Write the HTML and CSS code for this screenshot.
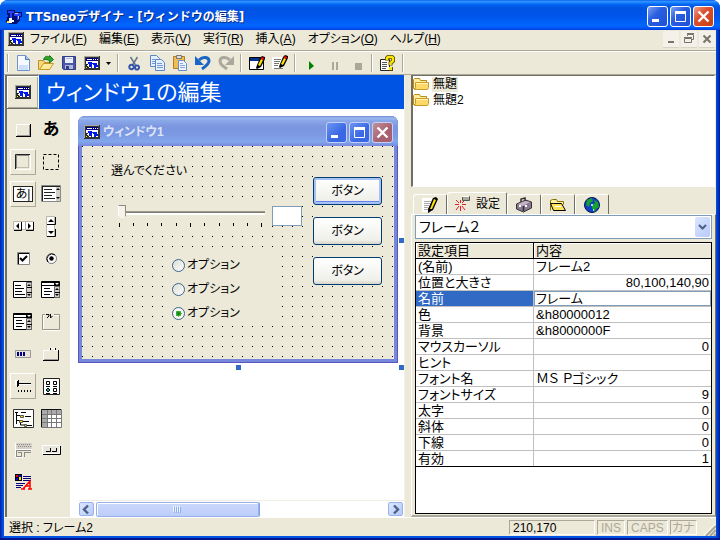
FILE: index.html
```html
<!DOCTYPE html>
<html lang="ja">
<head>
<meta charset="utf-8">
<title>TTSneoデザイナ</title>
<link rel="stylesheet" href="styles.css">
</head>
<body>
<svg class="defs" aria-hidden="true">
  <symbol id="app" viewBox="0 0 16 16"><g shape-rendering="crispEdges"><path fill="#333" d="M0 1h16v14H0z"/><path fill="#aaa89d" d="M0 1h15v1H1v12H0z"/><path fill="#fff" d="M2 3h12v10H2z"/><path fill="#000080" d="M2 3h12v3H2z"/><path fill="#fff" d="M3 4h5v1H3zM9 4h1v1H9zM11 4h1v1h-1zM13 4h1v1h-1z"/><path fill="#0018e8" d="M4 7h4v1h5v2h1v2h-2v1h-2v-3H9V9H8v3H7V9H4zM5 9h3v4H7v-1H5z"/><path fill="#222" d="M2 9h2v1H3v1h2v2H3v-1H2z"/><path fill="#ffe600" d="M2 12h1v1H2zM4 11h1v1H4z"/></g></symbol>
  <symbol id="folder" viewBox="0 0 16 14"><path fill="#fff0a0" stroke="#b88a18" d="M.5 11.500V2.500l1-1h5l1 2h6v8z"/><path fill="#ffd967" stroke="#c99a25" d="M2.500 5.500h13v5l-1 2h-13l1-2z"/><path fill="#fff5b8" d="M3 6h12v1H3z"/></symbol>
  <symbol id="pencil" viewBox="0 0 16 16"><path fill="#fff" d="M0 2h11v12H0z"/><path stroke="#777" d="M2 4.500h7M2 6.500h6M2 8.500h5M2 10.500h4M2 13.500h9"/><path fill="#000" d="m8 9 3-7 2-2 3 1v2l-4 8-4 2-1-1z"/><path fill="#ffe600" d="m9 9 3-6 2 1-3 6z"/><path fill="#f00" d="m12 2 1-1 2 1v1l-1 1-2-1z"/></symbol>
  <symbol id="listicon" viewBox="0 0 20 18"><path fill="#fff" stroke="#000" d="M.5.5h18v16H.5z"/><path stroke="#000" d="M2 4.500h6M2 7.500h9M2 10.500h7M2 13.500h10"/><path fill="#d4d0c8" stroke="#666" d="M13.500 1.500h5v15h-5z"/><path fill="#000" d="m16 3 2 2h-4zM14 13h4l-2 2z"/><path stroke="#000" d="M14 6.500h5M14 11.500h5"/></symbol>
  <symbol id="comboicon" viewBox="0 0 20 18"><path fill="#fff" stroke="#000" d="M.5.5h18v16H.5z"/><path fill="#000" d="M1 1h17v4H1z"/><path fill="#fff" d="M1 2h12v2H1z"/><path stroke="#000" d="M3 7.500h6M3 10.500h8M3 13.500h6"/><path fill="#d4d0c8" stroke="#666" d="M13.500 5.500h5v11h-5z"/><path fill="#fff" d="M14 2h4l-2 2z"/><path fill="#000" d="m16 7 2 2h-4zM14 13h4l-2 2z"/><path stroke="#000" d="M14 11.500h5"/></symbol>
</svg>
<div class="window">
  <header class="titlebar">
    <svg class="i16" viewBox="0 0 16 16"><g shape-rendering="crispEdges"><path fill="#001070" d="M1 1h8v2h7v5h-2v3l-3 4H4l-4-2 2-7H1z"/><path fill="#2840ff" d="M2 2h6v2H6v5H4V4H2zM8 4h7v3h-2v4h-2V7H8z"/><path fill="#fff" d="M3 9h3v2h2v2H6v1H3z"/><path fill="#ffe600" d="M1 12h2v2H1z"/><path fill="#b8c8ff" d="M9 4h3v1H9zM12 7h1v3h-1z"/></g></svg>
    <h1>TTSneoデザイナ - [ウィンドウの編集]</h1>
    <div class="caption">
      <button aria-label="最小化"><svg viewBox="0 0 19 19"><path fill="#fff" d="M4 12h7v3H4z"/></svg></button>
      <button aria-label="最大化"><svg viewBox="0 0 19 19"><path fill="none" stroke="#fff" d="M4.500 4.500h10v10h-10z"/><path fill="#fff" d="M4 4h11v3H4z"/></svg></button>
      <button class="close" aria-label="閉じる"><svg viewBox="0 0 19 19"><path stroke="#fff" stroke-width="2.400" d="m4.500 4.500 10 10M14.500 4.500l-10 10"/></svg></button>
    </div>
  </header>

  <nav class="menubar">
    <svg class="i16"><use href="#app"/></svg>
    <button>ファイル(<u>F</u>)</button><button>編集(<u>E</u>)</button><button>表示(<u>V</u>)</button><button>実行(<u>R</u>)</button><button>挿入(<u>A</u>)</button><button>オプション(<u>O</u>)</button><button>ヘルプ(<u>H</u>)</button>
    <div class="mdi">
      <button aria-label="子ウィンドウを最小化"><svg viewBox="0 0 16 16"><path fill="#777469" d="M5 10h6v2H5z"/></svg></button>
      <button aria-label="元に戻す"><svg viewBox="0 0 16 16"><path fill="none" stroke="#777469" d="M6.500 5V3.500h6v5H11M3.500 7.500h7v4h-7zM3 6.500h8M6 2.500h7"/></svg></button>
      <button aria-label="子ウィンドウを閉じる"><svg viewBox="0 0 16 16"><path stroke="#777469" stroke-width="2" d="m4.500 4.500 7 7M11.500 4.500l-7 7"/></svg></button>
    </div>
  </nav>

  <div class="toolbar" role="toolbar">
    <i class="grip"></i>
    <button aria-label="新規"><svg class="i16" viewBox="0 0 16 16"><path fill="#f4faff" stroke="#6f94cc" d="M2.500.5h8l4 4v11h-12z"/><path fill="#cfe0fa" d="M4 10h9v5H4z"/><path fill="#a9c3ef" stroke="#5579b5" d="M10.500.5v4h4"/></svg></button>
    <button aria-label="開く"><svg class="i16" viewBox="0 0 16 16"><path fill="#f8d878" stroke="#c09028" d="M.5 14.500v-9h5l1 2h5v7z"/><path fill="#ffe99a" stroke="#c99728" d="m1.500 14.500 4-6h10l-4 6z"/><path fill="#35a42c" stroke="#197a18" d="M5.500 4.500c1-3 3-4 6-2.500V.5l4 4-4 3.500V5.500c-2-1-4-1-6-1z"/></svg></button>
    <button aria-label="保存"><svg class="i16" viewBox="0 0 16 16"><path fill="#4d55a4" stroke="#303c86" d="M1.500 1.500h13v13h-12l-1-1z"/><path fill="#e8edff" d="M4 2h8v6H4z"/><path fill="#aab5e0" d="M5 3h6v1H5zM4 10h8v4H4z"/><path fill="#303c86" d="M5 11h3v4H5z"/></svg></button>
    <button aria-label="ウィンドウ追加"><svg class="i16"><use href="#app"/></svg></button>
    <button class="drop" aria-label="ウィンドウの種類"><svg viewBox="0 0 5 3"><path d="M0 0h5L2.500 3z"/></svg></button>
    <i class="sep"></i>
    <button aria-label="切り取り"><svg class="i16" viewBox="0 0 16 16"><path fill="none" stroke="#65778d" stroke-width="1.500" d="m4.500 2 5 8M11.500 2l-5 8"/><path fill="none" stroke="#3555aa" stroke-width="2" d="M3.500 13a2 2 0 1 0 4-2 2 2 0 1 0-4 2M9 13a2 2 0 1 0 4-1 2 2 0 1 0-4 1"/></svg></button>
    <button aria-label="コピー"><svg class="i16" viewBox="0 0 16 16"><g fill="#e4efff" stroke="#5d86c6"><path d="M1.500.5h6l3 3v8h-9z"/><path d="M6.500 4.500h6l3 3v8h-9z"/></g><path stroke="#7599d2" d="M3 4.500h4M3 6.500h3M3 8.500h3M8 8.500h5M8 10.500h6M8 12.500h6"/></svg></button>
    <button aria-label="貼り付け"><svg class="i16" viewBox="0 0 16 16"><path fill="#efbd55" stroke="#b47c20" d="M1.500 1.500h11v12h-11z"/><path fill="#ddd" stroke="#777" d="M4.500.5h5v3h-5z"/><path fill="#edf4ff" stroke="#678dcc" d="M6.500 5.500h5l3 3v7h-8z"/><path stroke="#8ba8d4" d="M8 8.500h3M8 10.500h5M8 12.500h5"/></svg></button>
    <button aria-label="元に戻す"><svg class="i16" viewBox="0 0 16 16"><path fill="none" stroke="#1964c6" stroke-width="3" d="M4 5c4-4 10-3 10 1 0 3-3 5-7 8"/><path fill="#1964c6" d="M0 1v9h9z"/></svg></button>
    <button aria-label="やり直し" disabled><svg class="i16" viewBox="0 0 16 16"><path fill="none" stroke="#aaa89d" stroke-width="3" d="M12 5C8 1 2 2 2 6c0 4 3 5 7 8"/><path fill="#aaa89d" d="M16 1v9H7z"/></svg></button>
    <i class="sep"></i>
    <button aria-label="ウィンドウ編集"><svg class="i16" viewBox="0 0 16 16"><path fill="#fff" stroke="#000" d="M.5 2.500h14v12H.5z"/><path fill="#003090" d="M1 3h13v3H1z"/><path fill="#000" d="m8 10 3-7 2-2 3 1v2l-4 8-4 2-1-1z"/><path fill="#ffe600" d="m9 10 3-6 2 1-3 6z"/><path fill="#f00" d="m12 3 1-1 2 1v1l-1 1-2-1z"/></svg></button>
    <button aria-label="コード編集"><svg class="i16"><use href="#pencil"/></svg></button>
    <i class="sep"></i>
    <button aria-label="実行"><svg class="i16" viewBox="0 0 16 16"><path fill="#008000" d="m6 6 5 5-5 4z"/></svg></button>
    <button aria-label="一時停止" disabled><svg class="i16" viewBox="0 0 16 16"><path fill="#aaa899" d="M6 7h2v8H6zM10 7h2v8h-2z"/></svg></button>
    <button aria-label="停止" disabled><svg class="i16" viewBox="0 0 16 16"><path fill="#aaa899" d="M6 8h7v7H6z"/></svg></button>
    <i class="sep"></i>
    <button aria-label="ヘルプ"><svg class="i16" viewBox="0 0 16 16"><path fill="#fff" stroke="#222" d="M.5 4.500h9v11h-9z"/><path stroke="#555" d="M2 7.500h5M2 9.500h5M2 11.500h5M2 13.500h4"/><path fill="none" stroke="#554800" stroke-width="4" d="M7 5.500V3l1-1h4l1 1v3l-2.500 2v2.500"/><path fill="#554800" d="M9 12h4v4H9z"/><path fill="none" stroke="#ffe500" stroke-width="2.400" d="M7 5V3l1-1h4l1 1v3l-2.500 2v2"/><path fill="#ffe500" d="M9 12h3v3H9z"/></svg></button>
    <i class="sep"></i>
  </div>

  <main class="work">
    <section class="editor">
      <div class="banner">
        <button aria-label="ウィンドウ"><svg class="i16"><use href="#app"/></svg></button>
        <h2>ウィンドウ１の編集</h2>
      </div>
      <div class="stage">
        <div class="toolbox" role="toolbar">
          <button aria-label="ボタン"><svg width="15" height="13" viewBox="0 0 15 13"><path fill="#ece9d8" d="M0 0h15v13H0z"/><path fill="#fff" d="M0 0h14v1H1v11H0z"/><path fill="#000" d="M14 0h1v13H0v-1h14z"/><path fill="#999" d="M13 1h1v11H1v-1h12z"/></svg></button>
          <button class="glyph">あ</button>
          <button class="raised" aria-label="フレーム"><svg width="16" height="16" viewBox="0 0 16 16"><path fill="none" stroke="#fff" d="M1.500 15.500h14V1"/><path stroke="#c0bdad" fill="none" d="M1 13.500h12.500V1"/><path fill="none" stroke="#222" d="M.5 15V.5H15"/><path fill="none" stroke="#888" d="M1.500 14V1.500H14"/></svg></button>
          <button aria-label="四角"><svg width="17" height="17" viewBox="0 0 17 17"><path fill="none" stroke="#000" stroke-dasharray="3 2" d="M.5.5h15v15H.5z"/></svg></button>
          <button class="raised textbox-tool"><span>あ|</span></button>
          <button aria-label="テキスト"><svg width="20" height="18" viewBox="0 0 20 18"><path fill="#fff" stroke="#888" d="M.5.5h19v16H.5z"/><path stroke="#222" d="M1 1.500h18M1.500 1v15M3 4.500h8M3 7.500h11M3 10.500h8M3 13.500h11"/><path fill="#d4d0c8" d="M15 2h4v14h-4z"/><path d="m17 3 2 2h-4zM15 12h4l-2 2z"/></svg></button>
          <button aria-label="水平スクロール"><svg width="21" height="10" viewBox="0 0 21 10"><path fill="#fff" stroke="#bbb7a8" d="M.5.5h20v8H.5z"/><path fill="#aaa" d="M8 1h1v8H8zM12 1h1v8h-1z"/><path fill="none" stroke="#000" d="M8.500 1v8.500H1M20.500 1v8.500H13"/><path d="M6 2v6L3 5zM15 2v6l3-3z"/></svg></button>
          <button aria-label="垂直スクロール"><svg width="10" height="21" viewBox="0 0 10 21"><path fill="#fff" stroke="#bbb7a8" d="M.5.5h8v20H.5z"/><path fill="none" stroke="#000" d="M1 8.500h8.500V1M1 20.500h8.500V13"/><path d="M2 6h6L5 3zM2 15h6l-3 3z"/></svg></button>
          <button aria-label="チェック"><svg width="13" height="13" viewBox="0 0 13 13"><path fill="#fff" stroke="#888" d="M.5.5h12v12H.5z"/><path fill="none" stroke="#000" d="M1.500 12V1.500H12"/><path fill="none" stroke="#000" stroke-width="2" d="m3 6 2.500 2.500L10 4"/></svg></button>
          <button aria-label="オプション"><svg width="13" height="13" viewBox="0 0 13 13"><circle cx="6.500" cy="6.500" r="5" fill="#fff" stroke="#777"/><path fill="none" stroke="#000" d="M3 10A5 5 0 0 1 10 3"/><circle cx="6.500" cy="6.500" r="2.200"/></svg></button>
          <button aria-label="リスト"><svg width="20" height="18"><use href="#listicon"/></svg></button>
          <button aria-label="コンボ"><svg width="20" height="18"><use href="#comboicon"/></svg></button>
          <button aria-label="ドロップダウン"><svg width="20" height="18"><use href="#comboicon"/></svg></button>
          <button aria-label="グループ"><svg width="19" height="19" viewBox="0 0 19 19"><path fill="none" stroke="#fff" d="M3 2.500H1.500v15h16v-15H12"/><path fill="none" stroke="#999688" d="M3 1.500H.5v15h17v-15H12"/><path fill="none" stroke="#000" d="M4 1.500h3V3L5 5M8.500 1v4l2-2"/></svg></button>
          <button aria-label="進行状況"><svg width="17" height="8" viewBox="0 0 17 8"><path fill="#e8e6da" stroke="#999" d="M.5.5h15v7H.5z"/><path fill="#000080" d="M2 2h2v4H2zM5 2h2v4H5zM8 2h2v4H8z"/></svg></button>
          <button aria-label="タブ"><svg width="17" height="15" viewBox="0 0 17 15"><path fill="#ece9d8" stroke="#fff" d="M.5 14V3.500h6v-2h5v2h4V14"/><path fill="none" stroke="#000" d="M7.500 1v2M12.500 1v2M0 13.500h15.500V3"/><path stroke="#999" d="M1 12.500h14"/></svg></button>
          <button class="raised" aria-label="スライダー"><svg width="17" height="14" viewBox="0 0 17 14"><path d="M2 4h14v1H2zM3 1h1v6H3zM2 2h1v6H2zM3 11h1v2H3zM6 11h1v2H6zM9 11h1v2H9zM12 11h1v2h-1zM15 11h1v2h-1z"/><path fill="#fff" d="M0 1h2v5H0zM4 5h12v1H4z"/></svg></button>
          <button aria-label="リストビュー"><svg width="17" height="17" viewBox="0 0 17 17"><path fill="#fff" stroke="#222" d="M.5.5h16v16H.5z"/><path fill="#fff" stroke="#000" d="M3.500 3.500h3v3h-3zM10.500 3.500h3v3h-3zM10.500 10.500h3v3h-3z"/><path fill="#00a8a0" stroke="#000" d="m5 10 2 2-2 2-2-2z"/><path stroke="#000" d="M3 8.500h4M10 8.500h4M3 15.500h4M10 15.500h4"/></svg></button>
          <button aria-label="ツリー"><svg width="21" height="19" viewBox="0 0 21 19"><path fill="#fff" stroke="#333" d="M.5.5h20v18H.5z"/><path stroke="#000" fill="none" d="M3.500 3v12M4 6.500h3M4 11.500h3M7.500 12v4H12M8 3.500h5M12 7.500h6M10 12.500h6M14 16.500h5M2 3.500h3"/><path fill="#ffe600" stroke="#555" d="M7.500 6.500h3v2h-3zM6.500 11.500h3v2h-3zM11.500 15.500h2v2h-2z"/></svg></button>
          <button aria-label="グリッド"><svg width="21" height="19" viewBox="0 0 21 19"><path fill="#fff" d="M0 0h21v19H0z"/><path fill="#aaa" d="M1 1h19v4H1zM1 1h5v17H1z"/><path fill="none" stroke="#777" d="M1 5.500h19M1 9.500h19M1 13.500h19M6.500 1v17M10.500 1v17M15.500 1v17M.5 18.500h20V.5H.5z"/><path fill="none" stroke="#111" d="M.5 18V.5H20"/></svg></button>
          <button aria-label="ツールバー"><svg width="17" height="15" viewBox="0 0 17 15"><path fill="#fff" d="M0 0h1v14H0zM1 6h16v1H1zM1 14h7v1H1z"/><path fill="#d4d0c8" d="M1 0h16v6H1z"/><path stroke="#888" stroke-dasharray="1 1" d="M2 1.500h14M3 3.500h13"/><path fill="none" stroke="#888" d="M1 7.500h15M1.500 8v5M9 9.500h7M9.500 10v4M3 9.500h4M6.500 10v4M1 13.500h6"/></svg></button>
          <button aria-label="ボタン列"><svg width="19" height="10" viewBox="0 0 19 10"><path fill="#e8e6da" stroke="#fff" d="M.5.5h17v8H.5z"/><path fill="none" stroke="#000" d="M1 9.500h17.500V1M4 6.500h4.500V3M10 6.500h4.500V3"/></svg></button>
          <button aria-label="リッチテキスト"><svg width="17" height="16" viewBox="0 0 17 16"><path fill="#000" d="M0 0h7v7H0z"/><path fill="#f00" d="M1 1h2v2H1z"/><path fill="#00f" d="M1 4h2v2H1zM4 1h2v2H4z"/><path fill="#ffe600" d="M4 3h2v3H4z"/><path stroke="#000080" d="M8 2.500h8M8 4.500h8M8 6.500h8M1 9.500h9M1 11.500h7M1 13.500h5"/><path fill="none" stroke="#f00" stroke-width="1.500" d="m8 15 7-8v8M10 12h5M6 15h4M13 15h4"/></svg></button>
        </div>

        <div class="canvas">
          <div class="surface">
            <div class="form">
              <div class="form-title">
                <svg class="i16"><use href="#app"/></svg>
                <h3>ウィンドウ1</h3>
                <div class="caption">
                  <button aria-label="最小化"><svg viewBox="0 0 19 19"><path fill="#fff" d="M4 12h7v3H4z"/></svg></button>
                  <button aria-label="最大化"><svg viewBox="0 0 19 19"><path fill="none" stroke="#fff" d="M4.500 4.500h10v10h-10z"/><path fill="#fff" d="M4 4h11v3H4z"/></svg></button>
                  <button class="close" aria-label="閉じる"><svg viewBox="0 0 19 19"><path stroke="#fff" stroke-width="2.400" d="m4.500 4.500 10 10M14.500 4.500l-10 10"/></svg></button>
                </div>
              </div>
              <div class="form-body">
                <label class="prompt" for="level">選んでください</label>
                <div class="slider">
                  <input id="level" type="range" min="0" max="10" value="0">
                  <svg class="ticks" viewBox="0 0 150 5"><path stroke="#000" d="M1.500 0v4M15.500 0v3M29.500 0v3M43.500 0v3M58.500 0v3M72.500 0v4M86.500 0v3M101.500 0v3M115.500 0v3M129.500 0v3M143.500 0v4"/></svg>
                </div>
                <input class="field" type="text" aria-label="値">
                <div class="frame">
                  <label><input type="radio" name="opt">オプション</label>
                  <label><input type="radio" name="opt">オプション</label>
                  <label><input type="radio" name="opt" checked>オプション</label>
                </div>
                <div class="buttons">
                  <button class="default">ボタン</button><button>ボタン</button><button>ボタン</button>
                </div>
              </div>
              <i class="handle east"></i><i class="handle south"></i><i class="handle corner"></i>
            </div>
          </div>
          <div class="hscroll">
            <button aria-label="左へ"><svg viewBox="0 0 13 13"><path fill="none" stroke="#4d6185" stroke-width="2.400" d="m8 2.500-4 4 4 4"/></svg></button>
            <div class="track"><div class="thumb"><svg width="8" height="7" viewBox="0 0 8 7"><path stroke="#eef4fe" d="M.5 0v6M2.500 0v6M4.500 0v6M6.500 0v6"/><path stroke="#8cb0f8" d="M1.500 1v6M3.500 1v6M5.500 1v6M7.500 1v6"/></svg></div></div>
            <button aria-label="右へ"><svg viewBox="0 0 13 13"><path fill="none" stroke="#4d6185" stroke-width="2.400" d="m5 2.500 4 4-4 4"/></svg></button>
          </div>
        </div>
      </div>
    </section>

    <aside class="side">
      <ul class="tree">
        <li><svg><use href="#folder"/></svg><span class="current">無題</span></li>
        <li><svg><use href="#folder"/></svg><span>無題2</span></li>
      </ul>
      <div class="tabs" role="tablist">
        <button role="tab" aria-label="編集"><svg class="i16" viewBox="0 0 16 16"><path fill="#fff" d="M0 1h10v14H0z"/><path stroke="#aaa" d="M2 4.500h7M2 6.500h6M2 8.500h5M2 10.500h4M2 12.500h5"/><path d="m6 12 5-11 3-1 2 2-5 11-5 3z"/><path fill="#ffe600" d="m8 12 4-10 2 1-4 9z"/></svg></button>
        <button role="tab" class="active" aria-selected="true"><svg class="i16" viewBox="0 0 16 16"><path stroke="#e02020" d="M6.500 4v3M6.500 10v5M1 8.500h4M8 8.500h4M2 4l3 3M11 4 8 7M2 14l3-4M11 14l-3-4"/><path fill="#aaa899" stroke="#555" d="M8.500.5h7v4h-7z"/><path stroke="#fff" d="M8 .5h7"/></svg>設定</button>
        <button role="tab" aria-label="部品"><svg class="i16" viewBox="0 0 16 16"><path fill="#8a7890" stroke="#333" d="m.5 7 9-4 6 2v6l-8 4-7-3z"/><path fill="#c5b4c9" d="m2 7 7-3 5 1-7 4z"/><path fill="none" stroke="#333" stroke-width="1.500" d="M5 5V2l4-1v3M7.500 9v5"/><path fill="#fff" d="M3 8h2v2H3zM9 8h2v2H9z"/></svg></button>
        <button role="tab" aria-label="フォルダー"><svg class="i16" viewBox="0 0 16 16"><path fill="#fff3a0" stroke="#887000" d="M.5 13.500v-10l2-1h4l1 2h6v3"/><path fill="#ffe35c" stroke="#000" d="M3.500 6.500h8l4 7h-12l-3-7z"/><path stroke="#fff" d="M5 9.500h6"/></svg></button>
        <button role="tab" aria-label="ウェブ"><svg class="i16" viewBox="0 0 16 16"><circle cx="8" cy="8" r="7.500" fill="#1240c0" stroke="#001850"/><path fill="#18a030" d="m3 3 5-2 1 3-3 2-1 4-3-2zM10 3l4 2 1 5-3 2-1 3-3-4V8l3-2z"/><path fill="#9adcf8" d="M7 7h2v2H7zM9 12h1v2H9z"/></svg></button>
      </div>
      <div class="pane">
        <div class="combo">
          <select aria-label="部品"><option>フレーム２</option></select>
          <svg viewBox="0 0 15 20"><path fill="none" stroke="#4d6185" stroke-width="2" d="m4 8 3.500 3.500L11 8"/></svg>
        </div>
        <div class="grid">
          <table>
            <thead><tr><th>設定項目</th><th>内容</th></tr></thead>
            <tbody>
              <tr><td>(名前)</td><td>フレーム2</td></tr>
              <tr><td>位置と大きさ</td><td class="num">80,100,140,90</td></tr>
              <tr class="selected"><td><label for="name">名前</label></td><td><input id="name" type="text" value="フレーム"></td></tr>
              <tr><td>色</td><td>&amp;h80000012</td></tr>
              <tr><td>背景</td><td>&amp;h8000000F</td></tr>
              <tr><td>マウスカーソル</td><td class="num">0</td></tr>
              <tr><td>ヒント</td><td></td></tr>
              <tr><td>フォント名</td><td>ＭＳ Ｐゴシック</td></tr>
              <tr><td>フォントサイズ</td><td class="num">9</td></tr>
              <tr><td>太字</td><td class="num">0</td></tr>
              <tr><td>斜体</td><td class="num">0</td></tr>
              <tr><td>下線</td><td class="num">0</td></tr>
              <tr><td>有効</td><td class="num">1</td></tr>
            </tbody>
          </table>
        </div>
      </div>
    </aside>
  </main>

  <footer class="status">
    <span class="message">選択 : フレーム2</span>
    <span class="cell position">210,170</span>
    <span class="cell off">INS</span>
    <span class="cell off caps">CAPS</span>
    <span class="cell off kana">カナ</span>
    <svg class="size-grip" viewBox="0 0 12 12"><path stroke="#fff" stroke-width="1" d="m0 11 11-11M4 11l7-7M8 11l3-3"/><path stroke="#aaa899" stroke-width="2" d="M2 12 12 2M6 12l6-6M10 12l2-2"/></svg>
  </footer>
</div>
</body>
</html>
```
FILE: styles.css
```css
:root {
  --face: #ece9d8;
  --shadow: #aca899;
  --dark: #716f64;
  --blue: #0054e3;
  --select: #316ac5;
  --line: #7f9db9;
}
* { box-sizing: border-box; }
body {
  margin: 0;
  background: #fff;
  color: #000;
  font: 12px/16px "Liberation Sans", "Noto Sans CJK JP", sans-serif;
  font-feature-settings: "palt";
}
button, input, select { font: inherit; font-feature-settings: inherit; color: inherit; }
button { padding: 0; border: 0; background: none; white-space: nowrap; }
h1, h2, h3, ul { margin: 0; padding: 0; font-size: inherit; font-weight: normal; }
svg { display: block; flex: none; }
.defs { position: absolute; width: 0; height: 0; }
.i16 { width: 16px; height: 16px; }

.window {
  display: flex;
  flex-direction: column;
  height: 100vh;
  padding: 0 4px 4px;
  border-radius: 8px 8px 0 0;
  background: linear-gradient(90deg, #001ea0, #0054e3 3px, #0054e3 calc(100% - 4px), #0019a0);
  box-shadow: inset 0 -2px #001590;
  overflow: hidden;
}
.titlebar {
  display: flex;
  align-items: center;
  gap: 4px;
  height: 30px;
  flex: none;
  margin: 0 -4px;
  padding: 3px 6px 0;
  background: linear-gradient(#0058ee, #3593ff 4%, #288eff 7%, #127dff 10%, #0262ee 16%, #0054e3 28%, #0055eb 55%, #0066ff 84%, #005bff 92%, #003dd7);
  color: #fff;
}
.titlebar h1 {
  flex: 1;
  font: bold 12px/16px "DejaVu Sans", "Noto Sans CJK JP", sans-serif;
  text-shadow: 1px 1px #0a2a80;
}
.caption { display: flex; gap: 2px; }
.caption button {
  width: 21px;
  height: 21px;
  border: 1px solid #fff;
  border-radius: 3px;
  background: linear-gradient(135deg, #7fa0f0, #2a5fe0 40%, #1c4fd8);
}
.caption svg { width: 19px; height: 19px; }
.caption .close { background: linear-gradient(135deg, #f0a088, #dc5030 40%, #c83c10); }

.menubar {
  display: flex;
  align-items: center;
  gap: 12px;
  height: 21px;
  flex: none;
  padding: 0 1px 2px 4px;
  border-bottom: 1px solid var(--shadow);
  background: var(--face);
}
.menubar > svg { margin-right: -6px; }
.mdi { display: flex; gap: 2px; margin-left: auto; }
.mdi button { width: 16px; height: 16px; background: #f3f1e9; box-shadow: 0 1px #d8d4c4; }

.toolbar {
  display: flex;
  align-items: center;
  height: 24px;
  flex: none;
  padding-left: 3px;
  border-top: 1px solid #fff;
  border-bottom: 1px solid var(--shadow);
  background: var(--face);
}
.toolbar button { display: grid; place-items: center; width: 23px; height: 20px; }
.toolbar .drop { width: 11px; }
.drop svg { width: 5px; height: 3px; }
.grip, .sep { width: 2px; height: 18px; margin: 0 3px; border-left: 1px solid var(--shadow); border-right: 1px solid #fff; }
.grip { margin: 0 2px 0 0; }

.work { display: grid; grid-template-columns: 401fr 311fr; flex: 1; min-height: 0; background: var(--face); }
.editor { display: flex; flex-direction: column; min-width: 0; padding-left: 1px; border-right: 1px solid #f4f2e8; }
.banner { display: flex; height: 34px; flex: none; background: var(--blue); color: #fff; }
.banner button {
  display: grid;
  place-items: center;
  width: 34px;
  border: 1px solid var(--dark);
  border-left-width: 2px;
  border-right-color: #fff;
  background: var(--face);
  box-shadow: inset 1px 1px #fff, inset -1px -1px var(--shadow);
}
.banner h2 { padding-left: 7px; font-size: 22px; line-height: 36px; }
.stage { display: flex; flex: 1; min-height: 0; }
.toolbox {
  display: grid;
  grid-template-columns: 28px 28px;
  grid-auto-rows: 32px;
  place-items: center;
  align-content: start;
  width: 65px;
  flex: none;
  padding: 5px 0 0 2px;
  border-left: 2px solid var(--dark);
}
.toolbox button { display: grid; place-items: center; width: 26px; height: 26px; }
.toolbox .raised { border: 1px solid #fff; border-right-color: var(--shadow); border-bottom-color: var(--shadow); }
.toolbox .glyph { font-size: 17px; font-weight: bold; }
.textbox-tool span { width: 20px; height: 16px; border: 1px solid #222; background: #fff; font-size: 12px; line-height: 14px; text-align: center; }
.canvas { display: flex; flex-direction: column; flex: 1; min-width: 0; background: #fff; }
.surface { flex: 1; min-height: 0; padding: 7px 6px 0 8px; }

.form {
  position: relative;
  padding: 0 4px 4px;
  border-radius: 7px 7px 0 0;
  background: #7688dc;
  box-shadow: inset 1px -1px #5c55bd, inset -1px 0 #5c55bd;
}
.form-title {
  display: flex;
  align-items: center;
  gap: 3px;
  height: 30px;
  margin: 0 -4px;
  padding: 2px 5px 0 6px;
  border-radius: 7px 7px 0 0;
  background: linear-gradient(#7590dc, #9ab8ee 8%, #8ba8e8 15%, #7c96e0 35%, #7b98e2 60%, #82a6ec 85%, #7888dc);
  color: #dce4f8;
}
.form-title h3 { flex: 1; font-size: 12px; font-weight: bold; }
.form-title .caption button { border-color: #c4d0f6; background: linear-gradient(135deg, #6a94f4, #3a68e4 60%); }
.form-title .caption .close { background: linear-gradient(135deg, #c09098, #a86070 60%); }
/* Designer surface: snap grid with freely placed parts */
.form-body {
  position: relative;
  height: 213px;
  background: conic-gradient(at 1px 1px, transparent 270deg, #000 270deg) 0 0 / 10px 10px, var(--face);
}
.prompt { position: absolute; left: 29px; top: 17px; width: 80px; background: var(--face); }
.slider { position: absolute; left: 30px; top: 55px; width: 156px; height: 31px; padding-left: 6px; background: var(--face); }
.slider input {
  -webkit-appearance: none;
  appearance: none;
  display: block;
  width: 147px;
  height: 22px;
  margin: 0;
  background: linear-gradient(var(--shadow), var(--dark)) 0 10px / 100% 2px no-repeat, linear-gradient(#fff, #fff) 0 12px / 100% 2px no-repeat;
}
.slider input::-webkit-slider-thumb {
  -webkit-appearance: none;
  width: 8px;
  height: 15px;
  border: 1px solid #8f8d80;
  border-left-color: #fff;
  background: #f4f2ea;
  clip-path: polygon(0 0, 100% 0, 100% 75%, 50% 100%, 0 75%);
}
.ticks { width: 150px; height: 5px; }
.field { position: absolute; left: 190px; top: 60px; width: 30px; height: 20px; padding: 0 2px; border: 1px solid var(--line); background: #fff; }
.frame { position: absolute; left: 84px; top: 107px; width: 113px; height: 73px; padding: 0 6px; background: var(--face); }
.frame label { display: flex; align-items: center; gap: 2px; height: 24px; }
.frame input {
  appearance: none;
  width: 13px;
  height: 13px;
  margin: 0;
  border: 1px solid #3a668e;
  border-radius: 50%;
  background: linear-gradient(135deg, #dcdcd4, #fff);
}
.frame input:checked { background: radial-gradient(circle, #168a16 0 1px, #55c045 3px, #f8f8f4 3px); }
.buttons { position: absolute; left: 230px; top: 30px; display: grid; gap: 12px; padding: 1px; }
.buttons button { width: 69px; height: 28px; border: 1px solid #003c74; border-radius: 3px; background: linear-gradient(#fff, #f0f0ea 85%, #d8d3c6); box-shadow: 0 0 0 1px var(--face); }
.buttons .default { box-shadow: inset 0 0 0 2px #a7c3f5, inset 0 -3px #6982ee, 0 0 0 1px var(--face); }
.handle { position: absolute; width: 5px; height: 5px; background: var(--select); }
.east { right: -6px; top: 122px; }
.south { left: 158px; bottom: -7px; }
.corner { right: -6px; bottom: -7px; }

.hscroll { display: flex; height: 17px; flex: none; margin: 0 1px 0 9px; padding: 1px 0; border-top: 1px solid #eeede5; }
.hscroll button { width: 15px; border: 1px solid #9ab2ec; border-radius: 2px; background: linear-gradient(135deg, #dbe6fe, #b7cafa); }
.hscroll button svg { width: 13px; height: 13px; }
.track { flex: 1; padding: 0 1px 0 2px; }
.thumb { display: grid; place-items: center; width: 56%; height: 15px; border: 1px solid #98b0ea; border-radius: 2px; background: linear-gradient(#cbd9fd, #bccdf9); box-shadow: inset 1px 1px #fff, 1px 0 #7ca0e8; }

.side { display: flex; flex-direction: column; min-width: 0; padding-left: 6px; }
.tree {
  height: 112px;
  flex: none;
  margin-right: 1px;
  border: 1px solid #fff;
  border-top: 1px solid var(--dark);
  border-left: 2px solid var(--dark);
  background: #fff;
  list-style: none;
}
.tree li { display: flex; align-items: center; gap: 3px; height: 16px; }
.tree svg { width: 16px; height: 14px; }
.tree span { padding: 0 1px; line-height: 15px; }
.current { background: var(--face); }

.tabs { display: flex; align-items: flex-end; height: 27px; flex: none; padding-left: 2px; }
.tabs button { display: flex; align-items: center; justify-content: center; gap: 6px; width: 34px; height: 20px; border-top: 1px solid #fff; border-left: 1px solid #fff; border-right: 1px solid var(--dark); border-radius: 3px 2px 0 0; }
.tabs .active { width: 60px; height: 22px; }
.pane {
  display: flex;
  flex-direction: column;
  gap: 3px;
  flex: 1;
  min-height: 0;
  padding: 0 3px 1px 3px;
  border: 1px solid #fff;
  border-right-color: var(--dark);
  border-bottom: 2px solid var(--shadow);
}
.combo { position: relative; height: 24px; flex: none; }
.combo select { width: 100%; height: 100%; appearance: none; padding: 0 20px 0 3px; border: 1px solid var(--line); border-radius: 0; background: #fff; font-size: 14px; }
.combo svg { position: absolute; right: 2px; top: 2px; width: 15px; height: 20px; border-radius: 2px; background: linear-gradient(135deg, #dbe6fe, #b7cafa); }
.grid { flex: 1; min-height: 0; border: 1px solid #000; background: #fff; overflow: hidden; }
table { width: 100%; table-layout: fixed; border-collapse: separate; border-spacing: 0; border-bottom: 1px solid #000; }
th, td { height: 16px; padding: 0 2px; border-bottom: 1px solid #c0c0c0; font-size: 13px; line-height: 15px; font-weight: normal; text-align: left; white-space: nowrap; }
tr > :first-child { width: 40%; border-right: 1px solid #c0c0c0; }
thead th { border-bottom-color: #000; background: var(--face); box-shadow: inset 1px 1px #fff; }
thead th:first-child { border-right-color: #000; }
tbody tr:last-child td { border-bottom: 0; height: 15px; }
td.num { text-align: right; }
.selected td:first-child { background: var(--select); color: #fff; }
.selected td:last-child { padding: 0; }
td input { display: block; width: 100%; height: 15px; padding: 0 1px; border: 1px solid var(--line); outline: 0; background: #fff; }

.status { display: flex; align-items: center; gap: 2px; height: 19px; flex: none; padding: 1px 0 0 5px; border-top: 1px solid #fff; background: var(--face); }
.message { flex: 1; }
.cell { height: 15px; padding: 0 3px; border: 1px solid var(--shadow); border-right-color: #fff; border-bottom-color: #fff; line-height: 14px; white-space: nowrap; }
.position { width: 86px; }
.off { width: 28px; color: var(--shadow); }
.caps { width: 41px; }
.kana { width: 27px; padding: 0 1px; }
.size-grip { width: 12px; height: 12px; margin: 4px 0 0 5px; }
```
